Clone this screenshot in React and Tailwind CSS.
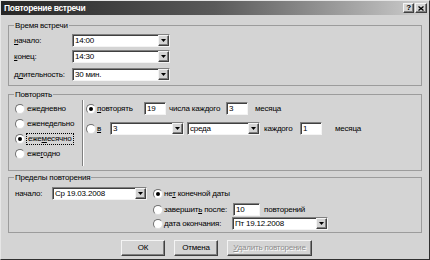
import React from "react";

// classic win9x style sunken / raised edges
const sunken =
  "border border-t-[#808080] border-l-[#808080] border-r-[#f4f4f4] border-b-[#f4f4f4] shadow-[inset_1px_1px_0_#404040]";
const raised =
  "border border-t-[#f4f4f4] border-l-[#f4f4f4] border-r-[#404040] border-b-[#404040] shadow-[inset_-1px_-1px_0_#808080]";

function DropBtn() {
  return (
    <div className={`w-[11px] h-full shrink-0 bg-[#d4d4d4] ${raised} flex items-center justify-center`}>
      <svg width="5" height="3" viewBox="0 0 5 3">
        <path d="M0 0h5L2.5 3z" fill="#000" />
      </svg>
    </div>
  );
}

function Combo({ w, value }) {
  return (
    <div className={`${w} h-[13px] shrink-0 flex bg-white ${sunken}`}>
      <div className="flex-1 pl-[2px] leading-[11px] whitespace-nowrap overflow-hidden">{value}</div>
      <DropBtn />
    </div>
  );
}

function Field({ w, value }) {
  return (
    <div className={`${w} h-[13px] shrink-0 bg-white pl-[2px] leading-[11px] ${sunken}`}>{value}</div>
  );
}

function Radio({ checked }) {
  return (
    <div className="w-[10px] h-[10px] shrink-0 rounded-full bg-white border border-t-[#707070] border-l-[#707070] border-r-[#dcdcdc] border-b-[#dcdcdc] flex items-center justify-center">
      {checked && <div className="w-[4px] h-[4px] rounded-full bg-black" />}
    </div>
  );
}

function Button({ w, children, disabled }) {
  return (
    <div
      className={`${w} h-[16px] bg-[#d4d4d4] ${raised} flex items-center justify-center whitespace-nowrap ${
        disabled ? "text-[#8c8c8c] [text-shadow:1px_1px_0_#fff]" : ""
      }`}
    >
      {children}
    </div>
  );
}

export default function App() {
  return (
    <div className="w-[430px] h-[260px] bg-[#d4d4d4] text-black text-[8px] tracking-[-0.2px] whitespace-nowrap font-['Liberation_Sans',Arial,sans-serif] border border-t-[#e6e6e6] border-l-[#e6e6e6] border-r-[#303030] border-b-[#303030] flex flex-col">
      {/* title bar */}
      <div className="h-[14px] shrink-0 flex items-center pl-[3px] pr-[2px] bg-linear-to-r from-[#262626] via-[#5a5a5a] to-[#d0d0d0]">
        <span className="font-bold text-white leading-[11px] text-[8.5px] tracking-[-0.3px]">Повторение встречи</span>
        <div className="ml-auto flex">
          <div className={`w-[11px] h-[10px] bg-[#d4d4d4] ${raised} flex items-center justify-center font-bold text-[8px] leading-[8px]`}>
            ?
          </div>
          <div className={`ml-[1px] w-[12px] h-[10px] bg-[#d4d4d4] ${raised} flex items-center justify-center`}>
            <svg width="6" height="5" viewBox="0 0 6 5">
              <path d="M0.5 0.5l5 4M5.5 0.5l-5 4" stroke="#000" strokeWidth="1.3" />
            </svg>
          </div>
        </div>
      </div>

      <div className="px-[7px] flex flex-col">
        {/* Время встречи */}
        <fieldset className="mt-[5px] border border-[#9c9c9c] px-[5px] pt-[3px] pb-[4px]">
          <legend className="px-[1px] leading-[11px]">Время встречи</legend>
          <div className="flex items-center h-[13px]">
            <span className="w-[58px]">
              <u>н</u>ачало:
            </span>
            <Combo w="w-[98px]" value="14:00" />
          </div>
          <div className="flex items-center h-[13px] mt-[3px]">
            <span className="w-[58px]">
              <u>к</u>онец:
            </span>
            <Combo w="w-[98px]" value="14:30" />
          </div>
          <div className="flex items-center h-[13px] mt-[5px]">
            <span className="w-[58px]">
              д<u>л</u>ительность:
            </span>
            <Combo w="w-[98px]" value="30 мин." />
          </div>
        </fieldset>

        {/* Повторять */}
        <fieldset className="mt-[3px] border border-[#9c9c9c] px-[5px] pb-[4px]">
          <legend className="px-[1px] leading-[11px]">Повторять</legend>
          <div className="flex h-[66px]">
            <div className="w-[68px] flex flex-col pt-[2px] gap-[2px]">
              <div className="flex items-center h-[13px] ml-[1px] gap-[2px]">
                <Radio />
                <span>
                  еже<u>д</u>невно
                </span>
              </div>
              <div className="flex items-center h-[13px] ml-[1px] gap-[2px]">
                <Radio />
                <span>
                  ежене<u>д</u>ельно
                </span>
              </div>
              <div className="flex items-center h-[13px] ml-[1px] gap-[1px]">
                <Radio checked />
                <span className="border border-dotted border-black px-[1px] leading-[10px]">
                  еже<u>м</u>есячно
                </span>
              </div>
              <div className="flex items-center h-[13px] ml-[1px] gap-[2px]">
                <Radio />
                <span>
                  еже<u>г</u>одно
                </span>
              </div>
            </div>
            <div className="w-[2px] border-l border-l-[#808080] border-r border-r-white" />
            <div className="pl-[2px] flex flex-col pt-[2px]">
              <div className="flex items-center h-[13px]">
                <div className="w-[58px] flex items-center gap-[1px]">
                  <Radio checked />
                  <span>
                    <u>п</u>овторять
                  </span>
                </div>
                <Field w="w-[22px]" value="19" />
                <span className="ml-[3px] w-[57px]">числа каждого</span>
                <Field w="w-[22px]" value="3" />
                <span className="ml-[7px]">месяца</span>
              </div>
              <div className="flex items-center h-[13px] mt-[7px]">
                <div className="w-[24px] flex items-center gap-[1px]">
                  <Radio />
                  <span>
                    <u>в</u>
                  </span>
                </div>
                <Combo w="w-[74px]" value="3" />
                <div className="ml-[3px]">
                  <Combo w="w-[73px]" value="среда" />
                </div>
                <span className="ml-[4px] w-[36px]">каждого</span>
                <Field w="w-[22px]" value="1" />
                <span className="ml-[13px]">месяца</span>
              </div>
            </div>
          </div>
        </fieldset>

        {/* Пределы повторения */}
        <fieldset className="mt-[1px] border border-[#9c9c9c] px-[5px] pt-[4px] pb-[2px]">
          <legend className="px-[1px] leading-[11px]">Пределы повторения</legend>
          <div className="flex">
            <div className="flex items-center h-[13px]">
              <span className="ml-[1px] w-[37px]">начало:</span>
              <Combo w="w-[95px]" value="Ср 19.03.2008" />
            </div>
            <div className="ml-[6px] flex flex-col">
              <div className="flex items-center h-[13px] gap-[1px]">
                <Radio checked />
                <span>
                  не<u>т</u> конечной даты
                </span>
              </div>
              <div className="flex items-center h-[13px] mt-[3px]">
                <div className="w-[80px] flex items-center gap-[1px]">
                  <Radio />
                  <span>
                    завершит<u>ь</u> после:
                  </span>
                </div>
                <Field w="w-[27px]" value="10" />
                <span className="ml-[4px]">повторений</span>
              </div>
              <div className="flex items-center h-[13px] mt-[1px]">
                <div className="w-[79px] flex items-center gap-[1px]">
                  <Radio />
                  <span>
                    <u>д</u>ата окончания:
                  </span>
                </div>
                <Combo w="w-[96px]" value="Пт 19.12.2008" />
              </div>
            </div>
          </div>
        </fieldset>

        {/* buttons */}
        <div className="mt-[7px] flex pl-[113px] gap-[9px]">
          <Button w="w-[44px]">ОК</Button>
          <Button w="w-[44px]">Отмена</Button>
          <Button w="w-[85px]" disabled>
            <span>
              <u>У</u>далить повторение
            </span>
          </Button>
        </div>
      </div>
    </div>
  );
}
